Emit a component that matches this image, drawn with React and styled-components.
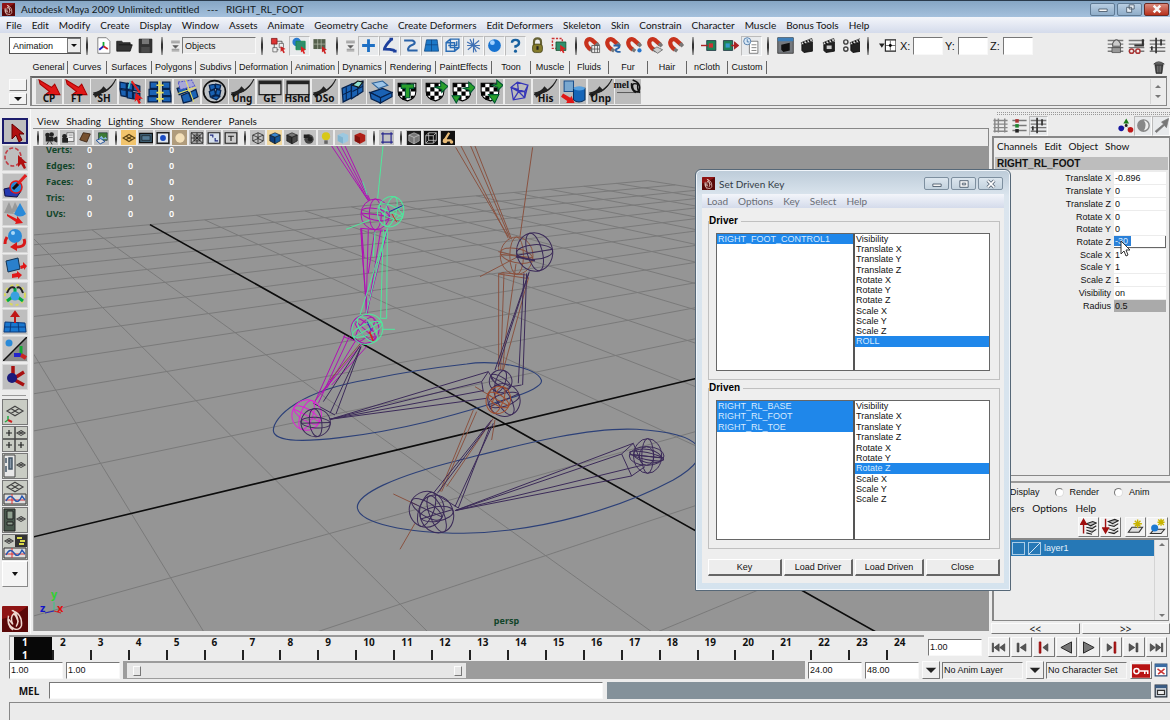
import React from "react";
import styled, { createGlobalStyle, css } from "styled-components";

const ui = `Lato, "Open Sans", sans-serif`;
const heavy = `"Noto Sans", "Open Sans", sans-serif`;
const sys = `"Liberation Sans", Arial, sans-serif`;

const Global = createGlobalStyle`
  * { box-sizing: border-box; }
  body { margin: 0; background: #ececec; color: #111; font: 9px/12px ${sys}; }
  button, input, select { font: inherit; color: inherit; margin: 0; padding: 0; border-radius: 0; }
  ul { margin: 0; padding: 0; list-style: none; }
`;

/* ---------- icon artwork, all on a 24 unit grid ---------- */
const blue = "#1d6fc4";
const tile = (d, k) => <path key={k} d={d} fill="#1a62b4" stroke="#06224d" strokeWidth="1.2" />;
const checker = (
  <>
    <path d="M3 4h17v8q0 7-8 9q-9-2-9-9z" fill="#fff" stroke="#000" />
    <path d="M3 4h4v4H3zM11 4h4v4h-4zM7 8h4v4H7zM15 8h5v4h-5zM3 12h4v4H3zM11 12h4v4h-4zM7 16h4v4H7zM15 16h4l-3 3h-1z" fill="#000" />
  </>
);
const horseshoe = (
  <>
    <path d="M10 18C-1 11 3 0 11 4L19 11" fill="none" stroke="#c8321c" strokeWidth="6" />
    <path d="M9 17l4 3M17 9l4 4" stroke="#777" strokeWidth="5" />
  </>
);
const clapper = (
  <>
    <path d="M4 11l15-4v13l-12 2-3-3z" fill="#222" stroke="#000" />
    <path d="M3 8l15-6 1 4-15 5z" fill="#ddd" stroke="#222" />
    <path d="M6 7l2 3M10 5l2 3M14 4l2 3" stroke="#111" strokeWidth="2" />
  </>
);
const cube = (a, b, c) => (
  <>
    <path d="M3 7l9-4 9 4-9 4z" fill={a} stroke="#111" />
    <path d="M3 7l9 4v11l-9-5z" fill={b} stroke="#111" />
    <path d="M12 11l9-4v10l-9 5z" fill={c} stroke="#111" />
  </>
);
const diamond = (x, y, s) => (
  <path
    d={`M${x} ${y - s * 0.6}l${s} ${s * 0.6}l${-s} ${s * 0.6}l${-s} ${-s * 0.6}zM${x - s / 2} ${y - s * 0.3}l${s} ${s * 0.6}M${x + s / 2} ${y - s * 0.3}l${-s} ${s * 0.6}`}
    fill="none" stroke="#444" strokeWidth="1.2"
  />
);
const bars = (
  <path d="M1 5h22M1 10h22M1 15h22M1 20h22" stroke="#777" strokeWidth="2" />
);
const sweep = (
  <>
    <path d="M1 15Q16 14 23 0" fill="none" stroke="#222" strokeWidth="1" />
    <path d="M1 13q7-1 10-6l3 3 8-7q-7 10-12 10l-7 5z" fill="#222" />
  </>
);
const redArrow = <path d="M2 1l12 7 3-3 5 10H8l4-3L3 5z" fill="#e01818" stroke="#a00" />;
const curveBox = (
  <>
    <path d="M1 13h22v10H1z" fill="#ddd" stroke="#333" />
    <path d="M2 19h20M9 13v10" stroke="#d33" />
    <path d="M3 20q4-8 8-2t8-3l3 4" fill="none" stroke="#2757b0" strokeWidth="1.4" />
  </>
);

const art = {
  maya: (
    <>
      <rect width="24" height="24" rx="1" fill="#8e1414" />
      <path d="M0 24V12q12-2 24-12v24z" fill="#5a0808" />
      <path d="M9 4q10 3 9 14-2 5-7 3-6-3-5-9l4 5q-3-7 1-10 6 7 2 12M6 9q-2 9 4 13M10 4q4 3 5 11" fill="none" stroke="#f0d8d0" strokeWidth="1.3" />
    </>
  ),
  scene: (
    <>
      <path d="M4 1h12l5 5v17H4z" fill="#fff" stroke="#555" />
      <path d="M12 13V7" stroke="#1a3" strokeWidth="2.5" />
      <path d="M12 13l-6 5" stroke="#22b" strokeWidth="2.5" />
      <path d="M12 13l6 4" stroke="#c22" strokeWidth="2.5" />
    </>
  ),
  open: <path d="M1 19V6h7l2 2h10v3h3l-3 9H1zM4 11h18" fill="#333" stroke="#111" />,
  save: (
    <>
      <path d="M3 3h18v19H3z" fill="#333" stroke="#111" />
      <path d="M7 3h10v7H7z" fill="#777" /><path d="M6 14h12v8H6z" fill="#4a4a4a" />
    </>
  ),
  grip: (
    <path d="M4 4h16M4 7h16M7 12h10l-5 5zM5 19h14M5 22h14" fill="#555" stroke="#777" strokeWidth="1.5" />
  ),
  hier: (
    <>
      <path d="M6 10v8h6M10 6h7v5" fill="none" stroke="#333" />
      <path d="M2 2h8v8H2z" fill="#d33" stroke="#711" /><path d="M13 9h6v6h-6zM4 15h6v6H4z" fill="#eee" stroke="#555" />
      <path d="M15 13l7 4-3 1 2 4-2 1-2-4-2 2z" fill="#c22" />
    </>
  ),
  obj: (
    <>
      <circle cx="8" cy="7" r="6" fill="#2a7bd0" /><path d="M7 6h13v12H7z" fill="#2f8f6c" stroke="#184" />
      <path d="M14 13l7 5-3 1 2 4-2 1-2-4-2 2z" fill="#d22" />
    </>
  ),
  comp: (
    <>
      <path d="M2 3h17v14H2z" fill="#55604c" /><path d="M8 3v14M13 3v14M2 10h17" stroke="#b8bfae" />
      <path d="M14 13l7 5-3 1 2 4-2 1-2-4-2 2z" fill="#c22" />
    </>
  ),
  plus: <path d="M12 3v18M3 12h18" stroke={blue} strokeWidth="4" />,
  bezier: <path d="M14 4q-8 8-9 13 8 0 14 2M12 3h5M3 17h4M17 20h5" fill="none" stroke="#1c3f9c" strokeWidth="4" />,
  curve: <path d="M3 5h12q6 3 0 6-8 3-6 8h13" fill="none" stroke="#2a63a8" strokeWidth="3" />,
  surf: <><path d="M5 4h15l2 16H2z" fill="#1b78c8" stroke="#0d427c" /><path d="M12 4v16M4 11h17" stroke="#0d427c" /></>,
  lattice: <path d="M3 8h12v12H3zM9 3h12v12H9zM3 8l6-5M15 20l6-5M6 12h12v-6" fill="none" stroke="#2a6cb4" strokeWidth="2" />,
  spark: <path d="M12 2v20M3 7l18 10M4 18L20 5M7 3l9 18M3 12h18" stroke="#3f70b4" strokeWidth="1.6" />,
  ball: <><circle cx="12" cy="12" r="9" fill="#1672d0" /><circle cx="9" cy="8" r="3.4" fill="#9fd0ff" /></>,
  help: <><path d="M7 8q0-4 5-4t5 4-5 5v2" fill="none" stroke="#17609f" strokeWidth="3.4" /><circle cx="12" cy="20" r="2.2" fill="#17609f" /></>,
  lock: <><path d="M7 11V7q0-5 5-5t5 5v4" fill="none" stroke="#666235" strokeWidth="3" /><rect x="5" y="10" width="14" height="12" rx="4" fill="#847b2b" stroke="#3b3812" /><path d="M12 13v5" stroke="#222" strokeWidth="3" /></>,
  selhi: (
    <>
      <path d="M2 2h14v14H2z" fill="none" stroke="#c33" strokeWidth="2" strokeDasharray="3 2" />
      <path d="M7 7h14v12H7z" fill="#2f8f6c" stroke="#142" /><path d="M13 11l8 6-4 1 2 4-2 1-2-4-2 2z" fill="#d22" />
    </>
  ),
  mgGrid: <>{horseshoe}<path d="M11 12h11v10H11zM15 12v10M19 12v10M11 17h11" fill="#eee" stroke="#444" /></>,
  mgCurve: <>{horseshoe}<path d="M12 12h8q2 3-4 5-3 4 6 4" fill="none" stroke="#2a63a8" strokeWidth="2.6" /></>,
  mgPoint: <>{horseshoe}<circle cx="19" cy="19" r="3" fill="#2574cc" /></>,
  mgPlane: <>{horseshoe}<path d="M8 18l6-4 8 4-7 5z" fill="#ccc" stroke="#555" /></>,
  mgLive: horseshoe,
  inp: <><path d="M8 5h13v14H8z" fill="#1f8258" stroke="#123" /><path d="M11 9h6v6h-6z" fill="#c33" /><path d="M0 12h10" stroke="#a22" strokeWidth="2" /></>,
  outp: <><path d="M2 5h13v14H2z" fill="#1f8258" stroke="#123" /><path d="M5 9h6v6H5z" fill="#39c" /><path d="M13 12h6M18 8l5 4-5 4z" stroke="#a22" fill="#a22" strokeWidth="2" /></>,
  hist: <><path d="M9 6h12v17H9z" fill="#fff" stroke="#555" /><path d="M12 11h7M12 15h7M12 19h7" stroke="#555" /><circle cx="6" cy="6" r="5" fill="#d8e8f6" stroke="#2a5f96" /><path d="M6 3v4h3" stroke="#2a5f96" fill="none" /></>,
  rview: <><path d="M1 1h22v22H1z" fill="#75797e" stroke="#222" /><path d="M1 1h22v5H1z" fill="#3f7fb8" /><path d="M6 11l12-3v11l-9 2-3-3z" fill="#111" /></>,
  clap: clapper,
  clapIpr: <>{clapper}<path d="M8 12h7v5H8z" fill="#ccc" /></>,
  clapSet: <><g transform="translate(7 0)">{clapper}</g><circle cx="4" cy="7" r="3" fill="none" stroke="#444" strokeWidth="2" /><circle cx="4" cy="17" r="3" fill="none" stroke="#444" strokeWidth="2" /></>,
  field: <><path d="M0 9h8l-4 6z" fill="#222" /><path d="M9 4h15v16H9z" fill="#fff" stroke="#222" strokeWidth="1.6" /><path d="M16 5v14M10 12h13" stroke="#333" /><circle cx="16" cy="12" r="2" /></>,
  bars1: <>{bars}<path d="M8 9q5-10 11 0v4H8z" fill="#ccc" stroke="#555" strokeWidth="1.5" /><path d="M7 15h12v7H7z" fill="#999" stroke="#444" /></>,
  bars2: <>{bars}<path d="M9 12h12V3" fill="none" stroke="#333" strokeWidth="3" /><circle cx="5" cy="20" r="3" fill="#eee" stroke="#a33" strokeWidth="2" /><circle cx="14" cy="20" r="3" fill="#eee" stroke="#a33" strokeWidth="2" /></>,
  bars3: <>{bars}<path d="M10 1v22M4 13v6M17 3v9" stroke="#333" strokeWidth="2.4" /></>,
  trash: <><path d="M5 8h14l-2 15H7z" fill="#444" stroke="#111" /><path d="M3 7q8-8 18 0z" fill="#777" stroke="#111" /><path d="M10 10v11M14 10v11" stroke="#aaa" /></>,

  arrowRed: redArrow,
  sweep,
  mesh1: (
    <>
      {["M1 3l6 1v6l-6-1zM8 4l5 1v6l-5-1zM14 5l6 2v5l-6-1z", "M1 10l6 1v6l-5-1zM8 11l5 1v7l-5-1zM14 13l6 1v6l-6-1z"].map(tile)}
      <path d="M12 2l8 11" stroke="#e02020" strokeWidth="2" /><path d="M11 2l-2 7" stroke="#5cc" strokeWidth="1.500" /><path d="M16 13l7 6h-4l2 4-2 1-2-4-2 2z" fill="#e01818" />
    </>
  ),
  mesh2: (
    <>
      {["M3 3h7v6H3zM15 3h7v6h-7z", "M2 10h8v6H2zM15 10h7l1 6h-8zM1 17h9v5H1zM15 17h8v5h-8z"].map(tile)}
      <path d="M12 2v20M9 6h7M9 13h7M9 19h7" stroke="#e8e060" strokeWidth="1.6" />
    </>
  ),
  mesh3: (
    <>
      {["M3 9l8-2 2 5-8 3z", "M7 16l7-3 3 8-8 2zM15 13l6-3 2 7-6 3z"].map(tile)}
      <path d="M4 3l13-2 3 6-14 3z" fill="#a8a8d8" stroke="#55c" strokeDasharray="2 1" /><path d="M11 1l8 21M4 14l17-6" stroke="#e8e060" />
    </>
  ),
  mesh4: <><circle cx="12" cy="12" r="10.5" fill="#bfc3c6" stroke="#111" strokeWidth="1.6" />{["M7 6l5-1 1 4-5 2zM13 5l5 1-1 4-4-1z", "M7 12l5-2 1 5-5 2zM14 10l4 1-1 5-4-1zM9 18l4-2 4 1-3 3z"].map(tile)}</>,
  win: <><path d="M2 2h21v13H2z" fill="#ccc" stroke="#222" strokeWidth="1.2" /><path d="M2 2h21v3H2z" fill="#222" /></>,
  slab1: <>{["M2 9l9-4v13l-8 4z", "M11 5l11-3v10l-11 7z"].map(tile)}<path d="M6 8v12M3 15l8-4M12 12l10-5M17 4v12" stroke="#06224d" /><path d="M12 6l5-4 5 1-4 5z" fill="#8fe0d0" stroke="#111" /></>,
  slab2: <><path d="M4 4l10-2 5 4-9 3z" fill="#9cc4e8" stroke="#2a5f96" />{["M2 13l12-4 9 4-11 5z", "M2 13l10 5v5l-9-4zM12 18l11-5v4l-11 6z"].map(tile)}</>,
  chk1: <>{checker}<path d="M6 5h12v4h-4v9h-4V9H6z" fill="#2aa02a" stroke="#053" /></>,
  chk2: <>{checker}<path d="M11 8l6-1V2l7 5-6 6v-3z" fill="#2aa02a" stroke="#053" /></>,
  chk3: <>{checker}<path d="M13 9l5-1V3l6 5-5 6v-3zM2 16h8l-4 7z" fill="#2aa02a" stroke="#053" /></>,
  chk4: <>{checker}<path d="M13 6l5-1V1l6 5-5 5v-3zM10 15h10l-4 8z" fill="#2aa02a" stroke="#053" /></>,
  wire: <path d="M5 8l6-5 10 3-3 6zM5 8l2 12 11-2 3-12M18 12v6M11 3l1 9-5 8M12 12l6 6M5 8l7 4h6" fill="none" stroke="#3535b8" strokeWidth="1.2" />,
  cyl: (
    <>
      <path d="M3 2h9v10H3z" fill="#7aa8d0" stroke="#1b4f8c" /><path d="M12 9v11q5 4 11 0V9z" fill="#1565b8" stroke="#06305f" />
      <ellipse cx="17.500" cy="9" rx="5.500" ry="2" fill="#55a0e0" /><path d="M2 14l7 4 1-2 3 7-8 0 1-2-6-4z" fill="#e01818" />
    </>
  ),
  swirl: <><path d="M1 13h22" stroke="#444" strokeWidth=".8" /><path d="M16 1q9 3 6 11-5 1-6-4t5-3q-1 6 2 8M15 4q-1 6 4 9" fill="none" stroke="#111" strokeWidth="1.4" /></>,

  pick: <path d="M8 4v15l4-4 3 7 3-2-3-6h5z" fill="#b01010" stroke="#600" />,
  lasso: <><ellipse cx="10" cy="11" rx="8" ry="9" fill="none" stroke="#c03c44" strokeWidth="1.6" strokeDasharray="4 2" /><path d="M15 9v12l3-3 3 5 2-1-2-5h3z" fill="#b01010" /></>,
  paint: <><path d="M1 15l9-2 8 4-4 6-12-1z" fill="#2438b0" stroke="#114" /><circle cx="13" cy="13" r="6" fill="#258ad8" stroke="#e01818" strokeWidth="1.500" /><path d="M12 13L23 1" stroke="#e02020" strokeWidth="3" /><path d="M10 15l5-5" stroke="#111" strokeWidth="3" /></>,
  move: <><path d="M1 12L6 1l5 12M7 13l5-12 4 8" fill="#999" /><path d="M17 2l6 11q-6 5-12 0z" fill="#2a8ad8" /><path d="M4 13l10 5v-3l6 7-8 1 1-2-9-6z" fill="#e01818" /></>,
  rotate: <><circle cx="12" cy="8" r="7" fill="#2a8ad8" /><circle cx="10" cy="5" r="2" fill="#a8d8f8" /><path d="M4 9q-2 3-2 7M21 11q3 8-8 8" fill="none" stroke="#d81818" strokeWidth="3" /><path d="M14 14v9l-7-4z" fill="#d81818" /></>,
  scale: <><path d="M3 6l12-3 2 11-12 3z" fill="#2a80cc" stroke="#135" /><path d="M17 11l3-1V7l4 4-3 4v-2l-3 1zM9 19l5-1v-2l5 4-4 4v-2l-6 1z" fill="#e01818" /></>,
  manip: <><circle cx="12" cy="12" r="10" fill="none" stroke="#d8d860" strokeWidth="2" strokeDasharray="3 3" /><path d="M12 12V5M12 12l-8 6M12 12l8 6" stroke="#0a4" strokeWidth="3" /><circle cx="12" cy="13" r="4.500" fill="#3aa0e0" /><path d="M4 10q3-8 8-5M20 10q-3-8-6-5" stroke="#222" fill="none" strokeWidth="2" /></>,
  soft: <><path d="M2 12l20 1 1 9H1z" fill="#1a78d0" stroke="#0a3a7c" /><path d="M8 12l-1 10M15 12l1 10M2 17h20" stroke="#0a3a7c" /><path d="M12 13V5M9 6l3-4 3 4z" stroke="#c01818" fill="#c01818" strokeWidth="2" /></>,
  show: <><path d="M0 0h24v24H0z" fill="#c4c4c4" /><path d="M0 24L24 0v24z" fill="#8a8a8a" /><path d="M0 24L24 0" stroke="#111" strokeWidth="1.500" /><circle cx="6" cy="6" r="3.500" fill="#2a8ad8" /><path d="M18 18V9" stroke="#1a3" strokeWidth="3" /><path d="M18 18h-7" stroke="#22c" strokeWidth="4" /><path d="M18 18l5 3" stroke="#c22" strokeWidth="4" /></>,
  joint: <><path d="M10 14V1M10 14l11-7M10 14l11 6" stroke="#a81010" strokeWidth="3.500" /><circle cx="9" cy="13" r="5" fill="#1a1a7c" /></>,

  lay1: <>{diamond(12, 11, 8)}<path d="M5 20v-4M5 20l-3 2" stroke="#2a4" strokeWidth="1.500" /><path d="M5 20l4 2" stroke="#c22" strokeWidth="2" /></>,
  lay2: <><path d="M12 0v24M0 12h24" stroke="#444" strokeWidth="1.500" /><path d="M6 3v6M3 6h6M6 15v6M3 18h6M18 15v6M15 18h6" stroke="#222" strokeWidth="1.200" />{diamond(18, 6, 4)}</>,
  lay3: <><path d="M1 1h11v22H1z" fill="#e8e8e8" stroke="#444" /><path d="M3 4v5M3 12v6M6 4h3v11H6z" stroke="#456" strokeWidth="1.500" fill="#89a" />{diamond(18, 11, 4)}</>,
  lay4: <>{diamond(12, 6, 8)}{curveBox}</>,
  lay5: <><path d="M1 1h11v22H1z" fill="#48584c" stroke="#222" /><path d="M4 3h6v8H4zM4 14h6v3H4z" fill="#8fa08f" stroke="#222" />{diamond(18, 11, 4)}</>,
  lay6: <><path d="M12 0h12v12H12z" fill="#333" /><path d="M14 3h5M17 6h5M16 9h5" stroke="#d8d848" strokeWidth="2" />{diamond(6, 6, 4)}{curveBox}</>,
  tri: <path d="M9 10h6l-3 4z" fill="#111" />,

  cam: <><path d="M3 10h13v8H3z" fill="#222" /><circle cx="6" cy="7" r="4" fill="#222" /><circle cx="13" cy="6" r="4" fill="#222" /><path d="M16 13l6-3v9l-6-3M8 18l-3 5M11 18l3 5" stroke="#222" fill="#222" strokeWidth="1.500" /></>,
  camAttr: <><path d="M10 3h12v15H10z" fill="#eee" stroke="#333" /><path d="M13 7h7M13 11h7" stroke="#555" /><path d="M2 12h10v8H2z" fill="#222" /><circle cx="6" cy="9" r="4" fill="#222" /></>,
  book: <path d="M3 15L9 3l12 2-6 14z" fill="#76502f" stroke="#3b2412" strokeWidth="1.500" />,
  imgp: <><path d="M6 3h15v13H6z" fill="#3c7a34" stroke="#123" /><path d="M6 14l5-6 4 5 3-3 3 4" fill="#88b8e0" /><path d="M2 16l8-3 7 5-8 4z" fill="#ddd" stroke="#114a9c" strokeWidth="1.500" /></>,
  gridy: <path d="M2 12l10-6 10 6-10 6zM7 9l10 6M17 9L7 15" fill="none" stroke="#5c4414" strokeWidth="2" />,
  film: <><path d="M1 4h22v16H1z" fill="#3c5c70" stroke="#111" strokeWidth="2" /><path d="M5 8h14v8H5z" fill="#547a94" stroke="#111" /></>,
  gate: <><path d="M2 3h20v18H2z" fill="#dfe6ee" stroke="#222" strokeWidth="2.500" /><circle cx="12" cy="12" r="5" fill="#1a4cc4" /></>,
  disc: <circle cx="12" cy="12" r="8" fill="#f4e0b8" />,
  chart: <path d="M2 3h20v18H2zM2 3l20 18M22 3L2 21M12 3v18M2 12h20M7 7h10v10H7z" fill="none" stroke="#222" strokeWidth="1.500" />,
  safe1: <><path d="M2 3h20v18H2z" fill="#d8e2ee" stroke="#222" strokeWidth="2" /><path d="M5 7h5v4M19 17h-5v-5" stroke="#222c80" fill="none" strokeWidth="2" /></>,
  safe2: <path d="M2 3h20v18H2zM7 9h10M12 9v8" fill="#ccc" stroke="#222" strokeWidth="2" />,
  cubeW: <path d="M3 7l9-4 9 4v10l-9 5-9-5zM3 7l9 4 9-4M12 11v11M12 3v10L3 17M12 13l9 4" fill="none" stroke="#222" strokeWidth="1.300" />,
  cubeB: cube("#3a88d0", "#0c3c78", "#14599c"),
  cubeG: cube("#777", "#333", "#4a4a4a"),
  camBall: <><circle cx="12" cy="14" r="8" fill="#444" /><path d="M3 6h10v6H3z" fill="#222" /><circle cx="14" cy="14" r="4" fill="#222" /></>,
  bulb: <><circle cx="12" cy="9" r="7" fill="#d8c818" /><path d="M9 16h6v6H9z" fill="#666" /></>,
  cubeS: <><path d="M3 7l9-4 9 4v10l-9 5-9-5z" fill="#9cc8e0" /><path d="M3 7l9 4v11l-9-5z" fill="#80b4d0" /></>,
  cubeR: <><path d="M3 7l9-4 9 4v10l-9 5-9-5z" fill="#b02018" /><path d="M3 7l9 4v11l-9-5z" fill="#84120c" /></>,
  isolate: <path d="M5 5h14v14H5zM2 5h6M16 5h6M2 19h6M16 19h6M5 2v6M19 2v6M5 16v6M19 16v6" fill="none" stroke="#24248c" strokeWidth="2" />,
  xray1: <><path d="M0 0h24v24H0z" fill="#1c1c1c" /><path d="M3 7l9-4 9 4v10l-9 5-9-5z" fill="#777" stroke="#ccc" /><path d="M3 7l9 4 9-4M12 11v11" stroke="#ddd" fill="none" /></>,
  xray2: <><path d="M0 0h24v24H0z" fill="#111" /><path d="M3 8h13v13H3zM8 3h13v13H8zM3 8l5-5M16 8l5-5M3 21l5-5M16 21l5-5" stroke="#ccc" fill="none" strokeWidth="1.300" /></>,
  xray3: <><path d="M0 0h24v24H0z" fill="#111" /><path d="M14 3L6 16h12" stroke="#e8bc78" strokeWidth="4" fill="none" /><circle cx="7" cy="17" r="4" fill="#e8bc78" /><circle cx="18" cy="19" r="3" fill="#e8bc78" /></>,

  cb1: <path d="M4 2v20M9 2v20M18 2v20M2 5h20M2 10h20M2 15h20M2 20h20" stroke="#888" strokeWidth="2" />,
  cb2: <><path d="M2 5h20M2 12h20M2 19h20" stroke="#777" strokeWidth="2" /><path d="M6 3h5v5H6z" fill="#a33" /><path d="M6 10h5v5H6z" fill="#283" /><path d="M6 17h5v5H6z" fill="#222" /></>,
  axes: <><path d="M13 13V4M13 13l-8 5M13 13l8 6" stroke="#999" /><path d="M13 2l4 7H9z" fill="#1a7a1a" /><circle cx="6" cy="16" r="4" fill="#1616a0" /><circle cx="19" cy="18" r="4" fill="#c01818" /><circle cx="13" cy="12" r="2" fill="#222" /></>,
  half: <><circle cx="12" cy="12" r="8" fill="#eee" stroke="#888" strokeWidth="2" /><path d="M12 4a8 8 0 0 0 0 16q6-8 0-16" fill="#888" /></>,
  dart: <path d="M22 2L12 7l3 3L3 20l2 2L16 12l3 3z" fill="#777" stroke="#777" />,
  layUp: <><path d="M9 8l9-3 5 2-8 4zM9 13l8 2 6-4M9 17l8 3 6-4M9 21l8 2" fill="#bbb" stroke="#222" strokeWidth="1.500" /><path d="M5 22V7M1 9l4-7 4 7z" stroke="#a01010" fill="#a01010" strokeWidth="2" /></>,
  layDn: <><path d="M9 5l9-3 5 2-8 4zM9 10l8 2 6-4M9 15l8 3 6-4M9 20l8 2 6-4" fill="#bbb" stroke="#222" strokeWidth="1.500" /><path d="M5 1v15M1 14l4 7 4-7z" stroke="#a01010" fill="#a01010" strokeWidth="2" /></>,
  layNew: <><path d="M2 20l5-7h15l-5 7z" fill="#ddd" stroke="#333" strokeWidth="1.500" /><path d="M15 2v12M9 8h12M11 4l8 8M19 4l-8 8" stroke="#c8b400" strokeWidth="2" /></>,
  layAdd: <><path d="M2 22l5-6h15l-5 6z" fill="#ddd" stroke="#333" strokeWidth="1.500" /><circle cx="8" cy="14" r="5" fill="#1b78d0" /><path d="M17 1v10M12 6h10M13 2l8 8M21 2l-8 8" stroke="#c8b400" strokeWidth="2" /></>,
  first: <path d="M2 5v14h2V5zM13 6v12l-8-6zM22 6v12l-8-6z" fill="#555" stroke="#333" />,
  prev: <path d="M5 5v14h3V5zM19 6v12l-9-6z" fill="#555" stroke="#333" />,
  prevKey: <><path d="M5 3v18h3V3z" fill="#b01818" stroke="#800" /><path d="M19 6v12l-8-6z" fill="#555" stroke="#333" /></>,
  back: <path d="M20 3v18L3 12z" fill="#777" stroke="#222" strokeWidth="1.500" />,
  play: <path d="M4 3v18l17-9z" fill="#777" stroke="#222" strokeWidth="1.500" />,
  nextKey: <><path d="M16 3v18h3V3z" fill="#b01818" stroke="#800" /><path d="M5 6v12l8-6z" fill="#555" stroke="#333" /></>,
  next: <path d="M16 5v14h3V5zM5 6v12l9-6z" fill="#555" stroke="#333" />,
  last: <path d="M20 5v14h2V5zM2 6v12l8-6zM11 6v12l8-6z" fill="#555" stroke="#333" />,
  key: <><path d="M0 3h24v18H0z" fill="#b81414" /><circle cx="6" cy="12" r="3.500" fill="none" stroke="#fff" strokeWidth="2" /><path d="M10 12h12M17 12v4M21 12v4" stroke="#fff" strokeWidth="2" /></>,
  prefs: <><path d="M2 2h20v20H2z" fill="#fff" stroke="#2c4c74" strokeWidth="2" /><path d="M2 2h20v5H2z" fill="#3a6ca4" /><path d="M6 10l12 9M18 10L7 19" stroke="#c33" strokeWidth="2.500" /></>,
  script: <><path d="M2 2h20v20H2z" fill="#cdd4dc" stroke="#222c3a" strokeWidth="2" /><path d="M2 2h20v5H2z" fill="#3a5c84" /><path d="M6 11h12v7H6z" fill="#eee" stroke="#333" strokeWidth="2" /></>,
  arrowDn: <path d="M3 8h18l-9 9z" fill="#222" />,
};

const Glyph = styled.svg.attrs({ viewBox: "0 0 24 24", "aria-hidden": true })`
  display: block;
  flex: none;
  width: ${(p) => p.$size}px;
  height: ${(p) => p.$size}px;
`;
const Icon = ({ name, size = 16 }) => <Glyph $size={size}>{art[name]}</Glyph>;

/* ---------- window frame ---------- */
const Shell = styled.div`
  position: relative;
  display: flex;
  flex-direction: column;
  height: 100vh;
  min-height: 640px;
  overflow: hidden;
`;
const TitleBar = styled.header`
  display: flex;
  align-items: center;
  height: 17px;
  padding: 0 1px 0 2px;
  gap: 6px;
  border-top: 1px solid #2a3a4b;
  background: linear-gradient(#86a6c4, #a4c0dc);
  font: 10px/15px ${ui};
  color: #101820;
`;
const TitleText = styled.span`
  flex: 1;
  white-space: pre;
`;
const CaptionButton = styled.button`
  display: grid;
  place-items: center;
  width: 25px;
  height: 13px;
  border: 1px solid ${(p) => (p.$close ? "#6d2a22" : "#5f7a94")};
  border-radius: 2px;
  background: ${(p) => (p.$close ? "linear-gradient(#d98a7c, #b8301c)" : "linear-gradient(#b9cee2, #8fadc9)")};
`;
const Captions = styled.div`
  display: flex;
  gap: 2px;
`;
const capArt = {
  min: <path d="M3 6h10v3H3z" fill="#f4f4f4" stroke="#445566" />,
  max: <path d="M3 2h10v8H3zM6 5h4v2H6z" fill="#f4f4f4" stroke="#445566" />,
  restore: <path d="M7 1h6v5H7zM4 4h6v6H4z" fill="#e8eef4" stroke="#445566" />,
  close: <path d="M4 2l8 8M12 2l-8 8" stroke="#f6f6f6" strokeWidth="3" />,
  closeG: <><path d="M4 2l8 8M12 2l-8 8" stroke="#566474" strokeWidth="4" /><path d="M4 2l8 8M12 2l-8 8" stroke="#fff" strokeWidth="2" /></>,
};
const CapIcon = styled.svg.attrs({ viewBox: "0 0 16 12" })`
  display: block;
  width: 14px;
  height: 10px;
`;
const MenuBar = styled.nav`
  display: flex;
  flex: none;
  align-items: center;
  gap: ${(p) => p.$gap || 10}px;
  height: ${(p) => p.$h || 16}px;
  padding-left: ${(p) => p.$pad || 6}px;
  ${(p) => p.$aero && css`background: linear-gradient(#f3f5fa, #d4dbeb);`}
  color: ${(p) => p.$color || "#111"};
`;
const MenuItem = styled.button`
  border: 0;
  background: none;
  white-space: nowrap;
  font: 10px/14px ${ui};
`;
const Menu = ({ items, ...rest }) => (
  <MenuBar {...rest}>
    {items.map((t) => <MenuItem key={t} type="button">{t}</MenuItem>)}
  </MenuBar>
);

/* ---------- status line ---------- */
const sunken = css`
  border: 1px solid;
  border-color: #777 #f8f8f8 #f8f8f8 #777;
`;
const raised = css`
  border: 1px solid;
  border-color: #fbfbfb #777 #777 #fbfbfb;
`;
const StatusLine = styled.div`
  display: flex;
  align-items: center;
  height: 25px;
  padding: 0 2px 0 9px;
`;
const ModeSelect = styled.select`
  appearance: none;
  width: 72px;
  height: 17px;
  padding-left: 3px;
  border: 1px solid #555;
  border-right: 0;
  background: #fff;
`;
const ModeBox = styled.label`
  position: relative;
  display: block;
`;
const ModeArrow = styled.span`
  position: absolute;
  top: 1px;
  right: 0;
  display: grid;
  place-items: center;
  width: 14px;
  height: 15px;
  background: #ececec;
  border: 1px solid #777;
  pointer-events: none;
`;
const Divider = styled.span`
  flex: none;
  width: 2px;
  height: ${(p) => p.$h || 18}px;
  margin: 0 ${(p) => p.$m || 5}px;
  background: linear-gradient(#aaa, #333 40%, #333 60%, #aaa);
`;
const ToolButton = styled.button`
  display: grid;
  place-items: center;
  flex: none;
  width: ${(p) => p.$w || 21}px;
  height: 20px;
  border: 0;
  background: none;
  ${(p) => p.$on && css`border: 1px solid; border-color: #bbb #fafafa #fafafa #bbb; background: #e8eaec;`}
`;
const MaskField = styled.input`
  width: 74px;
  height: 17px;
  padding: 0 2px;
  background: #e8e8e8;
  ${sunken}
`;
const Coord = styled.label`
  display: grid;
  grid-template-columns: 13px 30px;
  align-items: center;
  width: 45px;
  font: 11px/14px ${sys};
`;
const CoordInput = styled.input`
  width: 30px;
  height: 18px;
  background: #fff;
  ${sunken}
`;
const Spacer = styled.span`
  flex: 1;
`;

/* ---------- shelf ---------- */
const Shelf = styled.section`
  display: flex;
  height: 51px;
  border-bottom: 1px solid #888;
`;
const ShelfSide = styled.div`
  display: flex;
  flex-direction: column;
  justify-content: flex-end;
  gap: 2px;
  width: 30px;
  padding: 0 3px 3px 9px;
`;
const ShelfButton = styled.button`
  display: grid;
  place-items: center;
  height: 12px;
  background: #f2f2f2;
  ${raised}
`;
const ShelfMain = styled.div`
  flex: 1;
  min-width: 0;
  display: flex;
  flex-direction: column;
`;
const TabRow = styled.div`
  display: flex;
  align-items: center;
  height: 18px;
  padding-right: 4px;
`;
const Tab = styled.button`
  flex: none;
  height: 13px;
  width: ${(p) => p.$w}px;
  border: 0;
  border-right: 1px solid #666;
  background: none;
  line-height: 12px;
  white-space: nowrap;
`;
const ShelfBody = styled.div`
  display: flex;
  justify-content: space-between;
  height: 30px;
  margin-right: 3px;
  padding: 1px 2px 1px 4px;
  border: 1px solid #888;
  border-width: 2px 1px 1px 2px;
  border-top-color: #666;
`;
const ShelfGrid = styled.div`
  display: grid;
  grid-template-columns: repeat(22, 1fr);
  width: 607px;
`;
const ShelfItem = styled.button`
  position: relative;
  display: grid;
  place-items: center;
  width: 26px;
  height: 25px;
  border: 0;
  background: #bcbcbc;
`;
const ShelfLabel = styled.span`
  position: absolute;
  left: -2px;
  right: -2px;
  ${(p) => (p.$top ? "top: 0;" : "bottom: 0;")}
  text-align: ${(p) => (p.$top ? "left" : "center")};
  font: bold 10px/11px ${(p) => (p.$top ? `"Liberation Serif", serif` : heavy)};
  color: #111;
`;
const Scroller = styled.div`
  display: flex;
  flex-direction: column;
  justify-content: space-around;
  align-items: center;
  width: 14px;
  padding: 3px 0;
  border-left: 1px solid #d4d4d4;
`;
const Caret = styled.span`
  width: 0;
  border: ${(p) => (p.$big ? 4 : 3)}px solid transparent;
  ${(p) => (p.$up ? "border-top: 0; border-bottom-color: #777;" : `border-bottom: 0; border-top-color: ${p.$dark ? "#111" : "#777"};`)}
`;

/* ---------- work area ---------- */
const Work = styled.main`
  flex: 1;
  min-height: 0;
  display: flex;
  gap: 2px;
`;
const ToolBox = styled.aside`
  display: flex;
  flex-direction: column;
  width: 31px;
  padding: 9px 4px 2px 2px;
  border-right: 1px solid #fafafa;
`;
const ToolGrid = styled.div`
  display: grid;
  grid-template-rows: repeat(${(p) => p.$n}, 1fr);
  height: ${(p) => p.$h}px;
  flex: none;
  ${(p) => p.$rule && css`margin-top: 4px; padding-top: 3px; border-top: 1px solid #999;`}
`;
const BoxTool = styled.button`
  display: grid;
  place-items: center;
  width: 26px;
  height: 26px;
  background: ${(p) => (p.$plain ? "#f4f4f4" : p.$pale ? "#c9ccc4" : "#bebebe")};
  border: ${(p) => (p.$on ? "2px solid #1c1c6c" : "1px solid #d8d8d8")};
  ${(p) => p.$pale && "border-color: #777;"}
  ${(p) => p.$plain && "border-color: #fff #888 #888 #fff;"}
`;
const LogoSlot = styled.div`
  margin: auto 0 0;
`;
const Panel = styled.section`
  flex: 1;
  min-width: 0;
  display: flex;
  flex-direction: column;
  padding: 5px 0 3px;
`;
const PanelTools = styled.div`
  display: flex;
  flex: none;
  align-items: center;
  height: 18px;
  border-top: 1px solid #888;
  border-right: 1px solid #888;
`;
const PanelTool = styled.button`
  display: grid;
  place-items: center;
  flex: none;
  width: 15px;
  height: 15px;
  margin-right: 2px;
  border: 0;
  background: ${(p) => p.$bg || "#c2c2c2"};
`;
const ViewBox = styled.div`
  position: relative;
  flex: 1;
  min-height: 0;
  background: #959595;
  border-left: 1px solid #aaa;
`;
const Scene = styled.svg.attrs({ viewBox: "34 146 955 486", preserveAspectRatio: "xMinYMin slice" })`
  display: block;
  width: 100%;
  height: 100%;
`;
const Hud = styled.table`
  position: absolute;
  top: -4px;
  left: 12px;
  border-collapse: collapse;
  font: bold 9px/16px ${heavy};
  color: #fff;
  th { padding: 0; width: 35px; text-align: left; color: #12452a; }
  td { padding: 0 0 0 6px; width: 41px; text-align: left; font-weight: 600; }
`;
const CameraName = styled.span`
  position: absolute;
  left: 0;
  right: 10px;
  bottom: 3px;
  text-align: center;
  font: bold 9px/14px ${heavy};
  color: #12452a;
`;

/* ---------- channel box ---------- */
const Side = styled.aside`
  display: flex;
  flex-direction: column;
  width: 179px;
  padding-top: 3px;
`;
const Dots = styled.div`
  height: 3px;
  margin-left: 6px;
  border-top: 1px dotted #999;
  border-bottom: 1px dotted #999;
`;
const SideTools = styled.div`
  display: flex;
  align-items: center;
  height: 21px;
`;
const ChannelPane = styled.section`
  flex: 1;
  display: flex;
  flex-direction: column;
  margin-left: 1px;
  border: 1px solid #888;
  border-width: 2px 1px 1px 2px;
`;
const ObjectName = styled.h2`
  margin: 3px 1px 0;
  height: 13px;
  padding-left: 2px;
  background: #bdbdbd;
  font: bold 10px/14px ${sys};
`;
const Channels = styled.table`
  width: 100%;
  height: 140px;
  margin-top: 2px;
  border-collapse: collapse;
  th { padding: 0 3px 0 0; text-align: right; font-weight: 400; line-height: 12px; }
  td { padding: 0; width: 55px; }
`;
const ChannelInput = styled.input`
  display: block;
  width: 52px;
  height: 12px;
  padding: 0 1px;
  border: 0;
  background: ${(p) => (p.$locked ? "#aaa" : "#fff")};
  ${(p) => p.$edit && "border: 1px solid #666; border-top: 0; border-left: 0;"}
`;
const EditCell = styled.div`
  position: relative;
`;
const Picked = styled.span`
  position: absolute;
  left: 0;
  top: 0;
  height: 10px;
  padding: 0 3px 0 1px;
  line-height: 10px;
  background: #2a80d8;
  color: #dcecff;
`;
const Pointer = styled.svg.attrs({ viewBox: "0 0 12 18" })`
  position: absolute;
  left: 6px;
  top: 4px;
  width: 12px;
  height: 18px;
  z-index: 1;
`;
const LayerPane = styled.section`
  display: flex;
  flex-direction: column;
  height: 153px;
  margin-top: 5px;
  border-top: 2px solid #999;
`;
const Radios = styled.div`
  display: flex;
  flex: none;
  align-items: center;
  height: 18px;
  padding-left: 4px;
  gap: 15px;
`;
const Radio = styled.label`
  display: flex;
  align-items: center;
  gap: 6px;
  input {
    appearance: none;
    width: 9px;
    height: 9px;
    border: 1px solid;
    border-color: #777 #ddd #ddd #777;
    border-radius: 50%;
    background: #fff;
  }
`;
const LayerTools = styled.div`
  display: flex;
  flex: none;
  justify-content: flex-end;
  align-items: center;
  height: 23px;
  padding-right: 2px;
`;
const LayerButton = styled(ToolButton)`
  background: #f2f2f2;
  margin-left: ${(p) => (p.$gap ? 4 : 1)}px;
  ${raised}
`;
const LayerList = styled.div`
  flex: 1;
  display: flex;
  margin: 0 1px 2px;
  border: 2px solid #888;
  border-right-width: 1px;
  border-bottom-width: 1px;
`;
const LayerRow = styled.div`
  display: flex;
  align-items: center;
  gap: 3px;
  height: 16px;
  padding-left: 18px;
  background: #2678b6;
  color: #e4f0fa;
`;
const LayerCell = styled.span`
  width: 13px;
  height: 13px;
  border: 1px solid #a9cce6;
  ${(p) => p.$slash && "background: linear-gradient(to bottom right, transparent 46%, #cfe4f4 46%, #cfe4f4 54%, transparent 54%);"}
`;
const Fill = styled.div`
  flex: 1;
  min-width: 0;
`;
const PageButtons = styled.div`
  display: grid;
  flex: none;
  grid-template-columns: 1fr 1fr;
  gap: 2px;
  height: 11px;
`;
const PageButton = styled.button`
  background: #f0f0f0;
  font: 10px/8px ${heavy};
  ${raised}
`;

/* ---------- time controls ---------- */
const TimeRow = styled.div`
  display: flex;
  align-items: center;
  height: ${(p) => p.$h}px;
  padding: 0 2px 0 9px;
`;
const TimeLine = styled.div`
  flex: 1;
  height: 25px;
  padding-left: 4px;
  margin-right: 4px;
  border-top: 2px solid #999;
  border-left: 1px solid #999;
  display: grid;
  grid-template-columns: repeat(24, 1fr);
`;
const Frame = styled.div`
  display: flex;
  flex-direction: column;
  justify-content: space-between;
  padding-left: 8px;
  height: 23px;
  font: bold 10px/10px ${heavy};
  color: ${(p) => (p.$now ? "#fff" : "#111")};
  background: ${(p) => (p.$now ? "#080808" : "linear-gradient(#222, #222) left bottom / 2px 10px no-repeat")};
`;
const NumberField = styled.input`
  flex: none;
  width: ${(p) => p.$w || 54}px;
  height: 17px;
  margin-right: ${(p) => p.$gap || 3}px;
  padding: 0 1px;
  background: ${(p) => (p.$grey ? "#ececec" : "#fff")};
  ${sunken}
`;
const Transport = styled.div`
  display: grid;
  grid-template-columns: repeat(8, 1fr);
  width: 180px;
`;
const TransportButton = styled.button`
  display: grid;
  place-items: center;
  height: 20px;
  margin-right: 1px;
  background: #efefef;
  ${raised}
`;
const Range = styled.div`
  flex: 1;
  display: flex;
  height: 18px;
  margin-right: 3px;
  padding: 2px 0 1px 4px;
  background: #9c9c9c;
`;
const RangeBar = styled.div`
  display: flex;
  justify-content: space-between;
  align-items: center;
  width: 50%;
  padding: 0 4px 0 6px;
  background: #e6e6e6;
`;
const Handle = styled.span`
  width: 8px;
  height: 10px;
  ${raised}
`;
const SmallButton = styled.button`
  display: grid;
  place-items: center;
  flex: none;
  width: ${(p) => p.$w || 18}px;
  height: 18px;
  margin-right: 2px;
  background: #efefef;
  ${raised}
`;
const CommandRow = styled.label`
  display: flex;
  align-items: center;
  height: 21px;
  padding: 0 2px 0 9px;
`;
const CommandName = styled.span`
  width: 40px;
  text-align: center;
  font: bold 10px/14px ${heavy};
`;
const CommandInput = styled.input`
  flex: 553;
  min-width: 0;
  height: 17px;
  background: #fff;
  ${sunken}
`;
const CommandResult = styled.output`
  flex: 545;
  height: 17px;
  margin: 0 3px 0 4px;
  background: #84919a;
`;
const HelpLine = styled.footer`
  height: 18px;
  margin: 1px 0 0 9px;
  border-top: 1px solid #888;
  border-left: 1px solid #888;
  background: #ebebeb;
`;

/* ---------- dialog ---------- */
const Dialog = styled.section`
  position: absolute;
  left: 695px;
  top: 169px;
  width: 316px;
  padding: 0 6px 7px;
  border: 1px solid #566878;
  border-radius: 6px 6px 1px 1px;
  background: linear-gradient(#bccbd8, #dbe5ee 26px, #d5e3ee);
  box-shadow: inset 0 0 0 1px #f0f5fa;
`;
const DialogTitle = styled.header`
  display: flex;
  align-items: center;
  gap: 4px;
  height: 24px;
  padding: 3px 1px 0 0;
  font: 10px/14px ${ui};
  color: #333c46;
`;
const DialogCaption = styled(CaptionButton)`
  border-color: #7d8f9f;
  background: linear-gradient(#dce6ee, #c3d2de);
`;
const DialogBody = styled.form`
  padding: 7px 4px 7px 6px;
  background: #eeeeee;
`;
const Group = styled.fieldset`
  min-width: 0;
  margin: 0 0 2px;
  padding: 6px 9px 8px 7px;
  border: 1px solid #c0c0c0;
  legend { margin-left: -7px; padding: 0 3px 0 0; font: bold 10px/12px ${sys}; color: #000; }
`;
const Lists = styled.div`
  display: grid;
  grid-template-columns: repeat(2, minmax(0, 1fr));
  height: ${(p) => p.$h}px;
  border: 1px solid #666;
  background: #fff;
`;
const List = styled.ul`
  display: grid;
  grid-template-rows: repeat(13, 1fr);
  height: 135px;
  & + & { height: 100%; border-left: 2px solid #555; padding-bottom: ${(p) => p.$rest}px; }
`;
const Option = styled.li`
  min-height: 0;
  padding-left: 1px;
  line-height: 10px;
  white-space: nowrap;
  ${(p) => p.$on && "background: #1f87ea; color: #d6eaff;"}
`;
const DialogButtons = styled.div`
  display: grid;
  grid-template-columns: 74px 69px 69px 1fr;
  gap: 2px;
  margin-top: 10px;
`;
const DialogButton = styled.button`
  height: 17px;
  border: 1px solid;
  border-width: 1px 2px 2px 1px;
  border-color: #fff #666 #666 #fff;
  background: #ededed;
`;

/* ---------- scene geometry ---------- */
const gridPoint = (u, v) => {
  const a = 1.7825 + 0.39 * u;
  const b = 4.184 + 0.593 * v;
  const d = 2187 / (a + b);
  return [-148 + a * d, 57.5 + d];
};
const gridLine = (p, q) => `M${p.join(" ")}L${q.join(" ")}`;
const gridPaths = [];
for (let u = -4; u <= 12; u += 1) if (u) gridPaths.push(gridLine(gridPoint(u, u > 0 ? -6 : -3), gridPoint(u, 12)));
for (let v = -6; v <= 12; v += 1) if (v) gridPaths.push(gridLine(gridPoint(v < -3 ? 0 : -4.3, v), gridPoint(12, v)));

const Joint = ({ x, y, r, s, tilt = 0, color }) => (
  <g transform={`translate(${x} ${y}) rotate(${tilt})`} stroke={color} fill="none">
    <ellipse rx={r} ry={s || r} />
    <ellipse rx={r * 0.42} ry={s || r} />
    <ellipse rx={r} ry={(s || r) * 0.38} transform="rotate(12)" />
    <path d={`M${-r} -4L${r} 6`} />
  </g>
);

const purple = "#3b2a58";
const magenta = "#b010b4";
const mint = "#4fe89c";
const rust = "#8a5240";

const Skeleton = () => (
  <g transform="translate(260 140) scale(.3333)" strokeWidth="3" fill="none" strokeLinejoin="round">
    <g stroke="#2c4078" strokeWidth="3.400">
      <path d="M330 718C120 752 40 830 40 872C44 910 150 904 240 893C480 864 660 800 740 778C810 756 850 736 844 720C830 680 700 660 620 672Q460 690 330 718Z" />
      <path d="M600 960C400 1010 292 1062 292 1102C296 1150 440 1180 610 1180C850 1176 1090 1100 1240 1020C1380 940 1330 880 1130 868C980 860 760 920 600 960Z" />
    </g>
    <g stroke={magenta}>
      <path d="M215 18L325 182M230 18L325 182M243 18L328 182M255 18L330 180" />
      <path d="M302 265L320 520M302 265L382 272M312 355L305 268M325 268L318 520M362 272L322 520M345 268L325 400M382 272L322 510M304 265L308 350L318 480" />
      <path d="M255 585L165 785M268 590L175 790M285 605L200 745M305 612L185 760M320 620L215 735M250 590L310 612M235 690L160 790" />
    </g>
    <Joint x={346} y={223} r={43} s={46} color={magenta} />
    <g stroke={mint}>
      <path d="M369 18L353 175M258 268L330 240M308 125L322 165M382 265L380 535M370 270L362 535M382 265L300 525M378 275L318 522M345 275L340 350M362 535L380 535M365 568L405 568" />
      <path d="M388 222L430 198M395 245L432 218" />
    </g>
    <Joint x={392} y={215} r={39} s={46} tilt={15} color={mint} />
    <path d="M388 215L428 197" stroke="#1a2ca8" />
    <path d="M396 222l14 24" stroke="#c83020" />
    <Joint x={315} y={568} r={42} tilt={35} color={magenta} />
    <Joint x={322} y={568} r={48} s={44} tilt={-35} color={mint} />
    <path d="M328 575l12 28" stroke="#d02818" strokeWidth="5" />
    <path d="M322 545l12 28" stroke="#2040c0" />
    <g stroke={rust}>
      <path d="M587 22L745 290M603 18L745 295M632 18L750 295M645 18L755 298M818 22L780 290" />
      <path d="M715 335L825 360M660 410L770 352M716 400V690M732 400L722 690M716 402L800 415M725 398L800 405M806 412L730 690M768 372L736 600L728 690M716 402L732 398" />
      <path d="M640 810L540 1055M650 815L545 1055M700 835L560 1040M400 1062L470 1095M420 1228L465 1150M645 740L695 770M705 840L695 900M300 612L210 720" />
    </g>
    <Joint x={770} y={347} r={49} s={56} color={rust} />
    <g stroke={purple}>
      <path d="M808 395L715 680M806 400L705 690M800 400L788 735M792 400L775 730M785 735L755 740" />
      <path d="M300 618L190 785M303 620L210 820M303 620L228 822M160 790L225 825M210 838L685 695M210 838L665 725M210 838L670 752M210 838L680 775M685 695L665 725L670 755M685 695L700 720" />
      <path d="M695 840L520 1060M690 850L532 1060M700 850L585 1100M690 860L595 1104M520 1058L595 1104M585 1112L1120 910M585 1112L1085 942M585 1112L1150 975M585 1112L1115 1008M1120 910L1085 942L1115 1008L1155 980M1120 910L1145 970" />
      <path d="M768 350L825 362" strokeWidth="5" />
    </g>
    <Joint x={824} y={336} r={54} s={58} tilt={-15} color={purple} />
    <Joint x={140} y={825} r={44} s={46} tilt={20} color="#e020d8" />
    <Joint x={167} y={848} r={44} s={42} tilt={-8} color={purple} />
    <Joint x={722} y={724} r={34} s={34} tilt={20} color={purple} />
    <Joint x={732} y={780} r={48} s={50} tilt={-30} color={purple} />
    <Joint x={715} y={780} r={36} s={42} tilt={20} color="#a04c2c" />
    <Joint x={500} y={1108} r={52} s={54} tilt={20} color={purple} />
    <Joint x={530} y={1122} r={50} s={58} tilt={-22} color={purple} />
    <Joint x={1163} y={948} r={42} s={52} color={purple} />
    <Joint x={1160} y={948} r={52} s={28} color={purple} />
  </g>
);

const ViewportScene = () => (
  <Scene role="img" aria-label="Leg rig in the perspective view">
    <path d={gridPaths.join("")} fill="none" stroke="#7a7a7a" strokeWidth="1" />
    <path d={gridLine(gridPoint(0, 12), gridPoint(0, -6)) + gridLine(gridPoint(-4, 0), gridPoint(12, 0))} stroke="#0c0c0c" strokeWidth="1.600" />
    <Skeleton />
    <path d="M54 610V602" stroke="#3c8" strokeWidth="1" />
    <path d="M54 611l-9 2" stroke="#22b" strokeWidth="1" />
    <path d="M54 611l7 2" stroke="#c22" strokeWidth="1" />
    <g fontFamily="Noto Sans, sans-serif" fontWeight="700" fontSize="11">
      <text x="51" y="598" fill="#2fd02f">y</text>
      <text x="40" y="612" fill="#1212c8">z</text>
      <text x="57" y="612" fill="#e01010">x</text>
    </g>
  </Scene>
);

/* ---------- data ---------- */
const mainMenu = ["File", "Edit", "Modify", "Create", "Display", "Window", "Assets", "Animate", "Geometry Cache", "Create Deformers", "Edit Deformers", "Skeleton", "Skin", "Constrain", "Character", "Muscle", "Bonus Tools", "Help"];
const tabs = [["General", 38], ["Curves", 39], ["Surfaces", 45], ["Polygons", 44], ["Subdivs", 40], ["Deformation", 56], ["Animation", 47], ["Dynamics", 47], ["Rendering", 50], ["PaintEffects", 56], ["Toon", 39], ["Muscle", 39], ["Fluids", 39], ["Fur", 39], ["Hair", 39], ["nCloth", 41], ["Custom", 39]];
const shelf = [["arrowRed", "CP"], ["arrowRed", "FT"], ["sweep", "SH"], ["mesh1"], ["mesh2"], ["mesh3"], ["mesh4"], ["sweep", "Ung"], ["win", "GE"], ["win", "Hshd"], ["sweep", "DSo"], ["slab1"], ["slab2"], ["chk1"], ["chk2"], ["chk3"], ["chk4"], ["wire"], ["sweep", "His"], ["cyl"], ["sweep", "Unp"], ["swirl", "mel"]];
const panelTools = ["|", "cam", "camAttr", "book", "imgp", "|", "gridy", "film", "gate", "disc", "chart", "safe1", "safe2", "|", "cubeW", "cubeB", "cubeG", "camBall", "bulb", "cubeS", "cubeR", "|", "isolate", "|", "xray1", "xray2", "xray3"];
const lit = { gridy: "#f2c46c", disc: "#b09c7c", cubeB: "#f0d8a0" };
const channels = [["Translate X", "-0.896"], ["Translate Y", "0"], ["Translate Z", "0"], ["Rotate X", "0"], ["Rotate Y", "0"], ["Rotate Z", "-30"], ["Scale X", "1"], ["Scale Y", "1"], ["Scale Z", "1"], ["Visibility", "on"], ["Radius", "0.5"]];
const attrs = ["Visibility", "Translate X", "Translate Y", "Translate Z", "Rotate X", "Rotate Y", "Rotate Z", "Scale X", "Scale Y", "Scale Z"];

const Tools = ({ names, on = [], w }) =>
  names.map((n) => (
    <ToolButton key={n} type="button" aria-label={n} $on={on.includes(n)} $w={w}>
      <Icon name={n} size={17} />
    </ToolButton>
  ));

const ListGroup = ({ name, height, objects, options, picked }) => (
  <Group>
    <legend>{name}</legend>
    <Lists $h={height}>
      <List role="listbox" aria-label={`${name} objects`}>
        {objects.map((t) => <Option key={t} role="option" aria-selected $on>{t}</Option>)}
      </List>
      <List role="listbox" aria-label={`${name} attributes`} $rest={height - 137}>
        {options.map((t) => <Option key={t} role="option" aria-selected={t === picked} $on={t === picked}>{t}</Option>)}
      </List>
    </Lists>
  </Group>
);

export default function App() {
  return (
    <Shell>
      <Global />
      <TitleBar>
        <Icon name="maya" size={13} />
        <TitleText>{"Autodesk Maya 2009 Unlimited: untitled   ---   RIGHT_RL_FOOT"}</TitleText>
        <Captions>
          <CaptionButton type="button" aria-label="Minimize"><CapIcon>{capArt.min}</CapIcon></CaptionButton>
          <CaptionButton type="button" aria-label="Restore"><CapIcon>{capArt.restore}</CapIcon></CaptionButton>
          <CaptionButton type="button" aria-label="Close" $close><CapIcon>{capArt.close}</CapIcon></CaptionButton>
        </Captions>
      </TitleBar>
      <Menu items={mainMenu} $aero />

      <StatusLine>
        <ModeBox>
          <ModeSelect aria-label="Menu set" defaultValue="Animation"><option>Animation</option></ModeSelect>
          <ModeArrow><Caret $dark /></ModeArrow>
        </ModeBox>
        <Divider />
        <Tools names={["scene", "open", "save"]} />
        <Divider />
        <ToolButton type="button" aria-label="Mask presets" $w={14}><Icon name="grip" size={13} /></ToolButton>
        <MaskField aria-label="Selection mask" defaultValue="Objects" />
        <Divider />
        <Tools names={["hier", "obj", "comp"]} on={["obj"]} />
        <Divider />
        <ToolButton type="button" aria-label="Masks" $w={15}><Icon name="grip" size={13} /></ToolButton>
        <Tools names={["plus", "bezier", "curve", "surf", "lattice", "spark", "ball", "help"]} on={["plus", "bezier", "curve", "surf", "lattice", "spark", "ball", "help"]} />
        <Tools names={["lock", "selhi"]} w={22} />
        <Divider />
        <Tools names={["mgGrid", "mgCurve", "mgPoint", "mgPlane", "mgLive"]} />
        <Divider />
        <Tools names={["inp", "outp", "hist"]} on={["hist"]} />
        <Divider />
        <Tools names={["rview", "clap", "clapIpr", "clapSet"]} w={22} />
        <Divider />
        <Tools names={["field"]} w={26} />
        {["X:", "Y:", "Z:"].map((t) => <Coord key={t}>{t}<CoordInput /></Coord>)}
        <Spacer />
        <Tools names={["bars1", "bars2", "bars3"]} />
      </StatusLine>

      <Shelf>
        <ShelfSide>
          <ShelfButton type="button" aria-label="Shelf tabs" />
          <ShelfButton type="button" aria-label="Shelf menu"><Caret $dark $big /></ShelfButton>
        </ShelfSide>
        <ShelfMain>
          <TabRow>
            {tabs.map(([t, w]) => <Tab key={t} type="button" $w={w}>{t}</Tab>)}
            <Spacer />
            <Icon name="trash" size={14} />
          </TabRow>
          <ShelfBody>
            <ShelfGrid>
              {shelf.map(([n, label], i) => (
                <ShelfItem key={i} type="button" aria-label={label || n}>
                  <Icon name={n} size={25} />
                  {label && <ShelfLabel $top={label === "mel"}>{label}</ShelfLabel>}
                </ShelfItem>
              ))}
            </ShelfGrid>
            <Scroller><Caret $up /><Caret /></Scroller>
          </ShelfBody>
        </ShelfMain>
      </Shelf>

      <Work>
        <ToolBox>
          <ToolGrid $n={10} $h={273}>
            {["pick", "lasso", "paint", "move", "rotate", "scale", "manip", "soft", "show", "joint"].map((n) => (
              <BoxTool key={n} type="button" aria-label={n} $on={n === "pick"}><Icon name={n} size={24} /></BoxTool>
            ))}
          </ToolGrid>
          <ToolGrid $n={7} $h={193} $rule>
            {["lay1", "lay2", "lay3", "lay4", "lay5", "lay6", "tri"].map((n) => (
              <BoxTool key={n} type="button" aria-label={n} $pale $plain={n === "tri"}><Icon name={n} size={24} /></BoxTool>
            ))}
          </ToolGrid>
          <LogoSlot><Icon name="maya" size={26} /></LogoSlot>
        </ToolBox>

        <Panel>
          <Menu items={["View", "Shading", "Lighting", "Show", "Renderer", "Panels"]} $gap={7} $pad={4} $h={14} />
          <PanelTools>
            {panelTools.map((n, i) =>
              n === "|" ? <Divider key={i} $h={14} $m={4} /> : (
                <PanelTool key={n} type="button" aria-label={n} $bg={lit[n]}><Icon name={n} size={14} /></PanelTool>
              )
            )}
          </PanelTools>
          <ViewBox>
            <ViewportScene />
            <Hud>
              <tbody>
                {["Verts:", "Edges:", "Faces:", "Tris:", "UVs:"].map((t) => (
                  <tr key={t}><th scope="row">{t}</th><td>0</td><td>0</td><td>0</td></tr>
                ))}
              </tbody>
            </Hud>
            <CameraName>persp</CameraName>
          </ViewBox>
        </Panel>

        <Side>
          <Dots />
          <SideTools>
            <Tools names={["cb1", "cb2", "bars3"]} w={19} on={["bars3"]} />
            <Spacer />
            <Tools names={["axes", "half", "dart"]} w={18} on={["half", "dart"]} />
          </SideTools>
          <ChannelPane>
            <Menu items={["Channels", "Edit", "Object", "Show"]} $gap={7} $pad={3} />
            <ObjectName>RIGHT_RL_FOOT</ObjectName>
            <Channels>
              <tbody>
                {channels.map(([t, v]) => (
                  <tr key={t}>
                    <th scope="row">{t}</th>
                    <td>
                      {t === "Rotate Z" ? (
                        <EditCell>
                          <ChannelInput aria-label={t} $edit />
                          <Picked>{v}</Picked>
                          <Pointer><path d="M1 1v13l3-3 2 5 2-1-2-5h4z" fill="#fff" stroke="#333" /></Pointer>
                        </EditCell>
                      ) : (
                        <ChannelInput aria-label={t} defaultValue={v} $locked={t === "Radius"} />
                      )}
                    </td>
                  </tr>
                ))}
              </tbody>
            </Channels>
          </ChannelPane>
          <LayerPane>
            <Radios>
              {["Display", "Render", "Anim"].map((t) => <Radio key={t}><input type="radio" name="layers" />{t}</Radio>)}
            </Radios>
            <Menu items={["Layers", "Options", "Help"]} $gap={8} $pad={5} $h={14} />
            <LayerTools>
              {["layUp", "layDn", "layNew", "layAdd"].map((n) => (
                <LayerButton key={n} type="button" aria-label={n} $gap={n === "layNew"}><Icon name={n} size={17} /></LayerButton>
              ))}
            </LayerTools>
            <LayerList>
              <Fill>
                <LayerRow><LayerCell /><LayerCell $slash />layer1</LayerRow>
              </Fill>
              <Scroller><Caret $up /><Spacer /><Caret /></Scroller>
            </LayerList>
            <PageButtons>
              <PageButton type="button">&lt;&lt;</PageButton>
              <PageButton type="button">&gt;&gt;</PageButton>
            </PageButtons>
          </LayerPane>
        </Side>
      </Work>

      <TimeRow $h={26}>
        <TimeLine>
          {Array.from({ length: 24 }, (_, i) => (
            <Frame key={i} $now={i === 0}><span>{i + 1}</span>{i === 0 && <span>1</span>}</Frame>
          ))}
        </TimeLine>
        <NumberField aria-label="Current time" defaultValue="1.00" $gap={6} />
        <Transport>
          {["first", "prev", "prevKey", "back", "play", "nextKey", "next", "last"].map((n) => (
            <TransportButton key={n} type="button" aria-label={n}><Icon name={n} size={15} /></TransportButton>
          ))}
        </Transport>
      </TimeRow>
      <TimeRow $h={20}>
        <NumberField aria-label="Animation start" defaultValue="1.00" />
        <NumberField aria-label="Playback start" defaultValue="1.00" />
        <Range><RangeBar><Handle /><Handle /></RangeBar></Range>
        <NumberField aria-label="Playback end" defaultValue="24.00" />
        <NumberField aria-label="Animation end" defaultValue="48.00" />
        <SmallButton type="button" aria-label="Animation layers"><Icon name="arrowDn" size={14} /></SmallButton>
        <NumberField aria-label="Animation layer" defaultValue="No Anim Layer" $w={81} $grey />
        <SmallButton type="button" aria-label="Character sets"><Icon name="arrowDn" size={14} /></SmallButton>
        <NumberField aria-label="Character set" defaultValue="No Character Set" $w={81} $grey />
        <SmallButton type="button" aria-label="Auto key" $w={22}><Icon name="key" size={18} /></SmallButton>
        <Icon name="prefs" size={14} />
      </TimeRow>
      <CommandRow>
        <CommandName>MEL</CommandName>
        <CommandInput aria-label="MEL command" />
        <CommandResult />
        <Icon name="script" size={14} />
      </CommandRow>
      <HelpLine />

      <Dialog role="dialog" aria-label="Set Driven Key">
        <DialogTitle>
          <Icon name="maya" size={13} />
          <TitleText>Set Driven Key</TitleText>
          <Captions>
            <DialogCaption type="button" aria-label="Minimize"><CapIcon>{capArt.min}</CapIcon></DialogCaption>
            <DialogCaption type="button" aria-label="Maximize"><CapIcon>{capArt.max}</CapIcon></DialogCaption>
            <DialogCaption type="button" aria-label="Close"><CapIcon>{capArt.closeG}</CapIcon></DialogCaption>
          </Captions>
        </DialogTitle>
        <Menu items={["Load", "Options", "Key", "Select", "Help"]} $aero $gap={10} $h={14} $pad={5} $color="#6a6e76" />
        <DialogBody>
          <ListGroup name="Driver" height={138} objects={["RIGHT_FOOT_CONTROL1"]} options={[...attrs, "ROLL"]} picked="ROLL" />
          <ListGroup name="Driven" height={140} objects={["RIGHT_RL_BASE", "RIGHT_RL_FOOT", "RIGHT_RL_TOE"]} options={attrs} picked="Rotate Z" />
          <DialogButtons>
            {["Key", "Load Driver", "Load Driven", "Close"].map((t) => <DialogButton key={t} type="button">{t}</DialogButton>)}
          </DialogButtons>
        </DialogBody>
      </Dialog>
    </Shell>
  );
}
